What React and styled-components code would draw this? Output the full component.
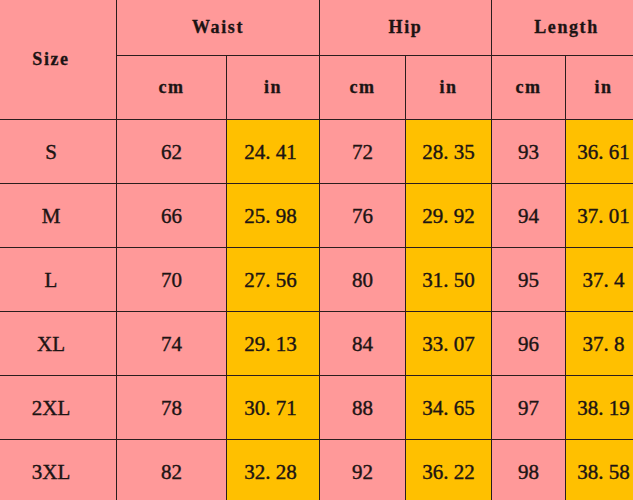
import React from "react";
import styled, { createGlobalStyle } from "styled-components";

const Global = createGlobalStyle`
  html, body { margin: 0; padding: 0; background: #fff; overflow: hidden; }
  body { width: 633px; height: 500px; }
`;

const PINK = "#ff9999";
const YELLOW = "#ffc000";

const Viewport = styled.div`
  width: 633px;
  height: 500px;
  overflow: hidden;
`;

const Chart = styled.div`
  display: grid;
  grid-template-columns: 130px 109px 92px 85px 85px 73px 75px;
  grid-template-rows: 55px 63px repeat(6, 63px);
  gap: 1px;
  background: #2b1d1d;
  margin-left: -14px;
  width: max-content;
`;

const Cell = styled.div`
  display: flex;
  align-items: center;
  justify-content: center;
  background: ${(p) => (p.$yellow ? YELLOW : PINK)};
  font-family: "Liberation Serif", "Noto Sans CJK SC", serif;
  font-size: ${(p) => (p.$head ? "18px" : "21px")};
  font-weight: ${(p) => (p.$head ? 700 : 400)};
  letter-spacing: ${(p) => (p.$head ? "1.6px" : "0")};
  -webkit-text-stroke: ${(p) => (p.$head ? "0.3px" : "0.4px")};
  color: #1c1414;
  white-space: pre;
  padding-top: ${(p) => (p.$head ? "0" : "2px")};
  padding-right: ${(p) => (p.$shift ? "5px" : "0")};
  grid-column: ${(p) => (p.$colSpan ? `span ${p.$colSpan}` : "auto")};
  grid-row: ${(p) => (p.$rowSpan ? `span ${p.$rowSpan}` : "auto")};
`;

const rows = [
  ["S", "62", "24. 41", "72", "28. 35", "93", "36. 61"],
  ["M", "66", "25. 98", "76", "29. 92", "94", "37. 01"],
  ["L", "70", "27. 56", "80", "31. 50", "95", "37. 4"],
  ["XL", "74", "29. 13", "84", "33. 07", "96", "37. 8"],
  ["2XL", "78", "30. 71", "88", "34. 65", "97", "38. 19"],
  ["3XL", "82", "32. 28", "92", "36. 22", "98", "38. 58"],
];

export default function App() {
  return (
    <Viewport>
      <Global />
      <Chart>
        <Cell $head $rowSpan={2}>Size</Cell>
        <Cell $head $colSpan={2}>Waist</Cell>
        <Cell $head $colSpan={2}>Hip</Cell>
        <Cell $head $colSpan={2}>Length</Cell>
        {["cm", "in", "cm", "in", "cm", "in"].map((u, i) => (
          <Cell $head key={"u" + i}>{u}</Cell>
        ))}
        {rows.map((r) =>
          r.map((v, i) => (
            <Cell
              key={r[0] + i}
              $yellow={i === 2 || i === 4 || i === 6}
              $shift={i === 2}
            >
              {v}
            </Cell>
          ))
        )}
      </Chart>
    </Viewport>
  );
}
